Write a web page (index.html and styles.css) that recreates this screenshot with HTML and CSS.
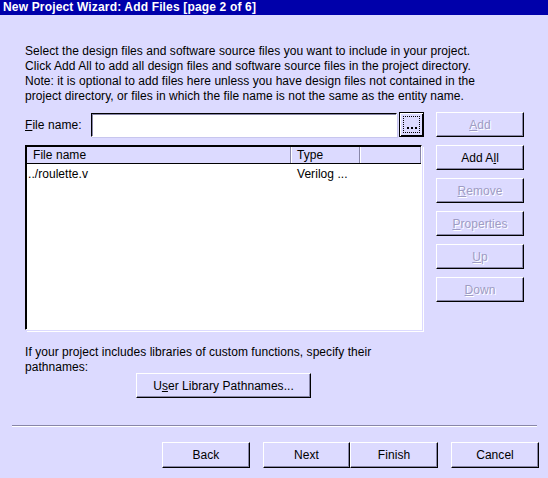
FILE: index.html
```html
<!DOCTYPE html>
<html>
<head>
<meta charset="utf-8">
<link rel="stylesheet" href="styles.css">
</head>
<body>
<div class="window">
  <div class="titlebar">New Project Wizard: Add Files [page 2 of 6]</div>
  <div class="content">
    <p class="intro">Select the design files and software source files you want to include in your project.<br>Click Add All to add all design files and software source files in the project directory.<br>Note: it is optional to add files here unless you have design files not contained in the<br>project directory, or files in which the file name is not the same as the entity name.</p>
    <div class="main">
      <div class="file-row">
        <label class="file-label"><u>F</u>ile name:</label>
        <div class="input"></div>
        <div class="browse"><span class="focus"><i></i><i></i><i></i></span></div>
      </div>
      <div class="btn disabled"><u>A</u>dd</div>
      <div class="list">
        <div class="list-head">
          <div class="col c1">File name</div>
          <div class="col c2">Type</div>
          <div class="col c3"></div>
        </div>
        <div class="list-row">
          <div class="cell c1">../roulette.v</div>
          <div class="cell c2">Verilog ...</div>
        </div>
      </div>
      <div class="side">
        <div class="btn">Add A<u>l</u>l</div>
        <div class="btn disabled"><u>R</u>emove</div>
        <div class="btn disabled"><u>P</u>roperties</div>
        <div class="btn disabled"><u>U</u>p</div>
        <div class="btn disabled"><u>D</u>own</div>
      </div>
    </div>
    <p class="libs">If your project includes libraries of custom functions, specify their<br>pathnames:</p>
    <div class="btn lib-btn">U<u>s</u>er Library Pathnames...</div>
  </div>
  <div class="separator"></div>
  <div class="footer">
    <div class="btn fbtn">Back</div>
    <div class="pair">
      <div class="btn fbtn">Next</div>
      <div class="btn fbtn">Finish</div>
    </div>
    <div class="btn fbtn">Cancel</div>
  </div>
</div>
</body>
</html>
```

FILE: styles.css
```css
* { box-sizing: border-box; }
html, body {
  margin: 0;
  padding: 0;
  background: #dcdaff;
}
body {
  font-family: "Liberation Sans", Arial, sans-serif;
  font-size: 12px;
  letter-spacing: 0.05px;
  color: #000;
}
.window {
  width: 548px;
  height: 478px;
  background: #dcdaff;
  display: flex;
  flex-direction: column;
}
.titlebar {
  height: 15px;
  background: #0000aa;
  color: #fff;
  font-weight: bold;
  font-size: 12px;
  letter-spacing: 0.16px;
  line-height: 15px;
  padding-left: 3px;
  white-space: nowrap;
}
.content {
  padding: 0 24px 0 25px;
  display: flex;
  flex-direction: column;
}
.intro {
  margin: 29px 0 0 0;
  line-height: 15px;
  white-space: nowrap;
}
.main {
  margin-top: 8px;
  display: grid;
  grid-template-columns: 399px 88px;
  column-gap: 12px;
  row-gap: 8px;
}
.file-row {
  display: flex;
  align-items: center;
  height: 25px;
}
.file-label {
  width: 66px;
}
.input {
  width: 306px;
  height: 24px;
  background: #fff;
  border-top: 1px solid #000;
  border-left: 1px solid #000;
  border-right: 1px solid #fff;
  border-bottom: 1px solid #fff;
  box-shadow: inset 1px 1px 0 #8886a8, 1px 1px 0 #c8c6ee;
}
.browse {
  margin-left: 2px;
  width: 25px;
  height: 25px;
  border: 1px solid #000;
  box-shadow: inset 1px 1px 0 #fff, inset -1px -1px 0 #000;
  display: flex;
  align-items: center;
  justify-content: center;
  background: #dcdaff;
}
.browse .focus {
  width: 17px;
  height: 17px;
  border: 1px dotted #000;
  display: flex;
  align-items: flex-end;
  justify-content: center;
  gap: 2px;
  padding-bottom: 3px;
}
.browse .focus i {
  width: 2px;
  height: 2px;
  background: #000;
}
.btn {
  height: 25px;
  display: flex;
  align-items: center;
  justify-content: center;
  background: #dcdaff;
  border-top: 1px solid #fff;
  border-left: 1px solid #fff;
  border-right: 1px solid #000;
  border-bottom: 1px solid #000;
  box-shadow: inset -1px -1px 0 #8886a8;
  white-space: nowrap;
}
.btn.disabled {
  color: #9e9cc4;
  text-shadow: 1px 1px 0 #fff;
}
.list {
  height: 185px;
  width: 397px;
  background: #fff;
  border-top: 1px solid #000;
  border-left: 1px solid #000;
  border-right: 1px solid #fff;
  border-bottom: 1px solid #fff;
  box-shadow: inset 1px 1px 0 #000, 1px 1px 0 #dcdaff, 2px 2px 0 #fff;
  overflow: hidden;
}
.list-head {
  display: flex;
  height: 17px;
  margin: 1px 0 0 1px;
  background: #dcdaff;
  border-bottom: 1px solid #000;
}
.col {
  line-height: 16px;
  padding-left: 6px;
  border-right: 1px solid #8886a8;
  box-shadow: 1px 0 0 #fff;
}
.col.c1 { width: 264px; }
.col.c2 { width: 69px; }
.col.c3 { width: 61px; }
.list-row {
  display: flex;
  line-height: 15px;
  padding-top: 3px;
}
.cell.c1 { width: 271px; padding-left: 2px; }
.cell.c2 { padding-left: 0; }
.side {
  display: flex;
  flex-direction: column;
  gap: 8px;
}
.libs {
  margin: 15px 0 0 0;
  line-height: 15px;
  white-space: nowrap;
}
.lib-btn {
  margin-top: -2px;
  margin-left: 111px;
  width: 175px;
}
.separator {
  margin: 27px 11px 0 12px;
  height: 2px;
  border-top: 1px solid #8886a8;
  border-bottom: 1px solid #fff;
}
.footer {
  margin-top: 15px;
  margin-left: 162px;
  display: flex;
  gap: 13px;
}
.pair { display: flex; }
.fbtn {
  width: 88px;
  height: 26px;
}
.pair .fbtn:first-child { width: 87px; }
```
